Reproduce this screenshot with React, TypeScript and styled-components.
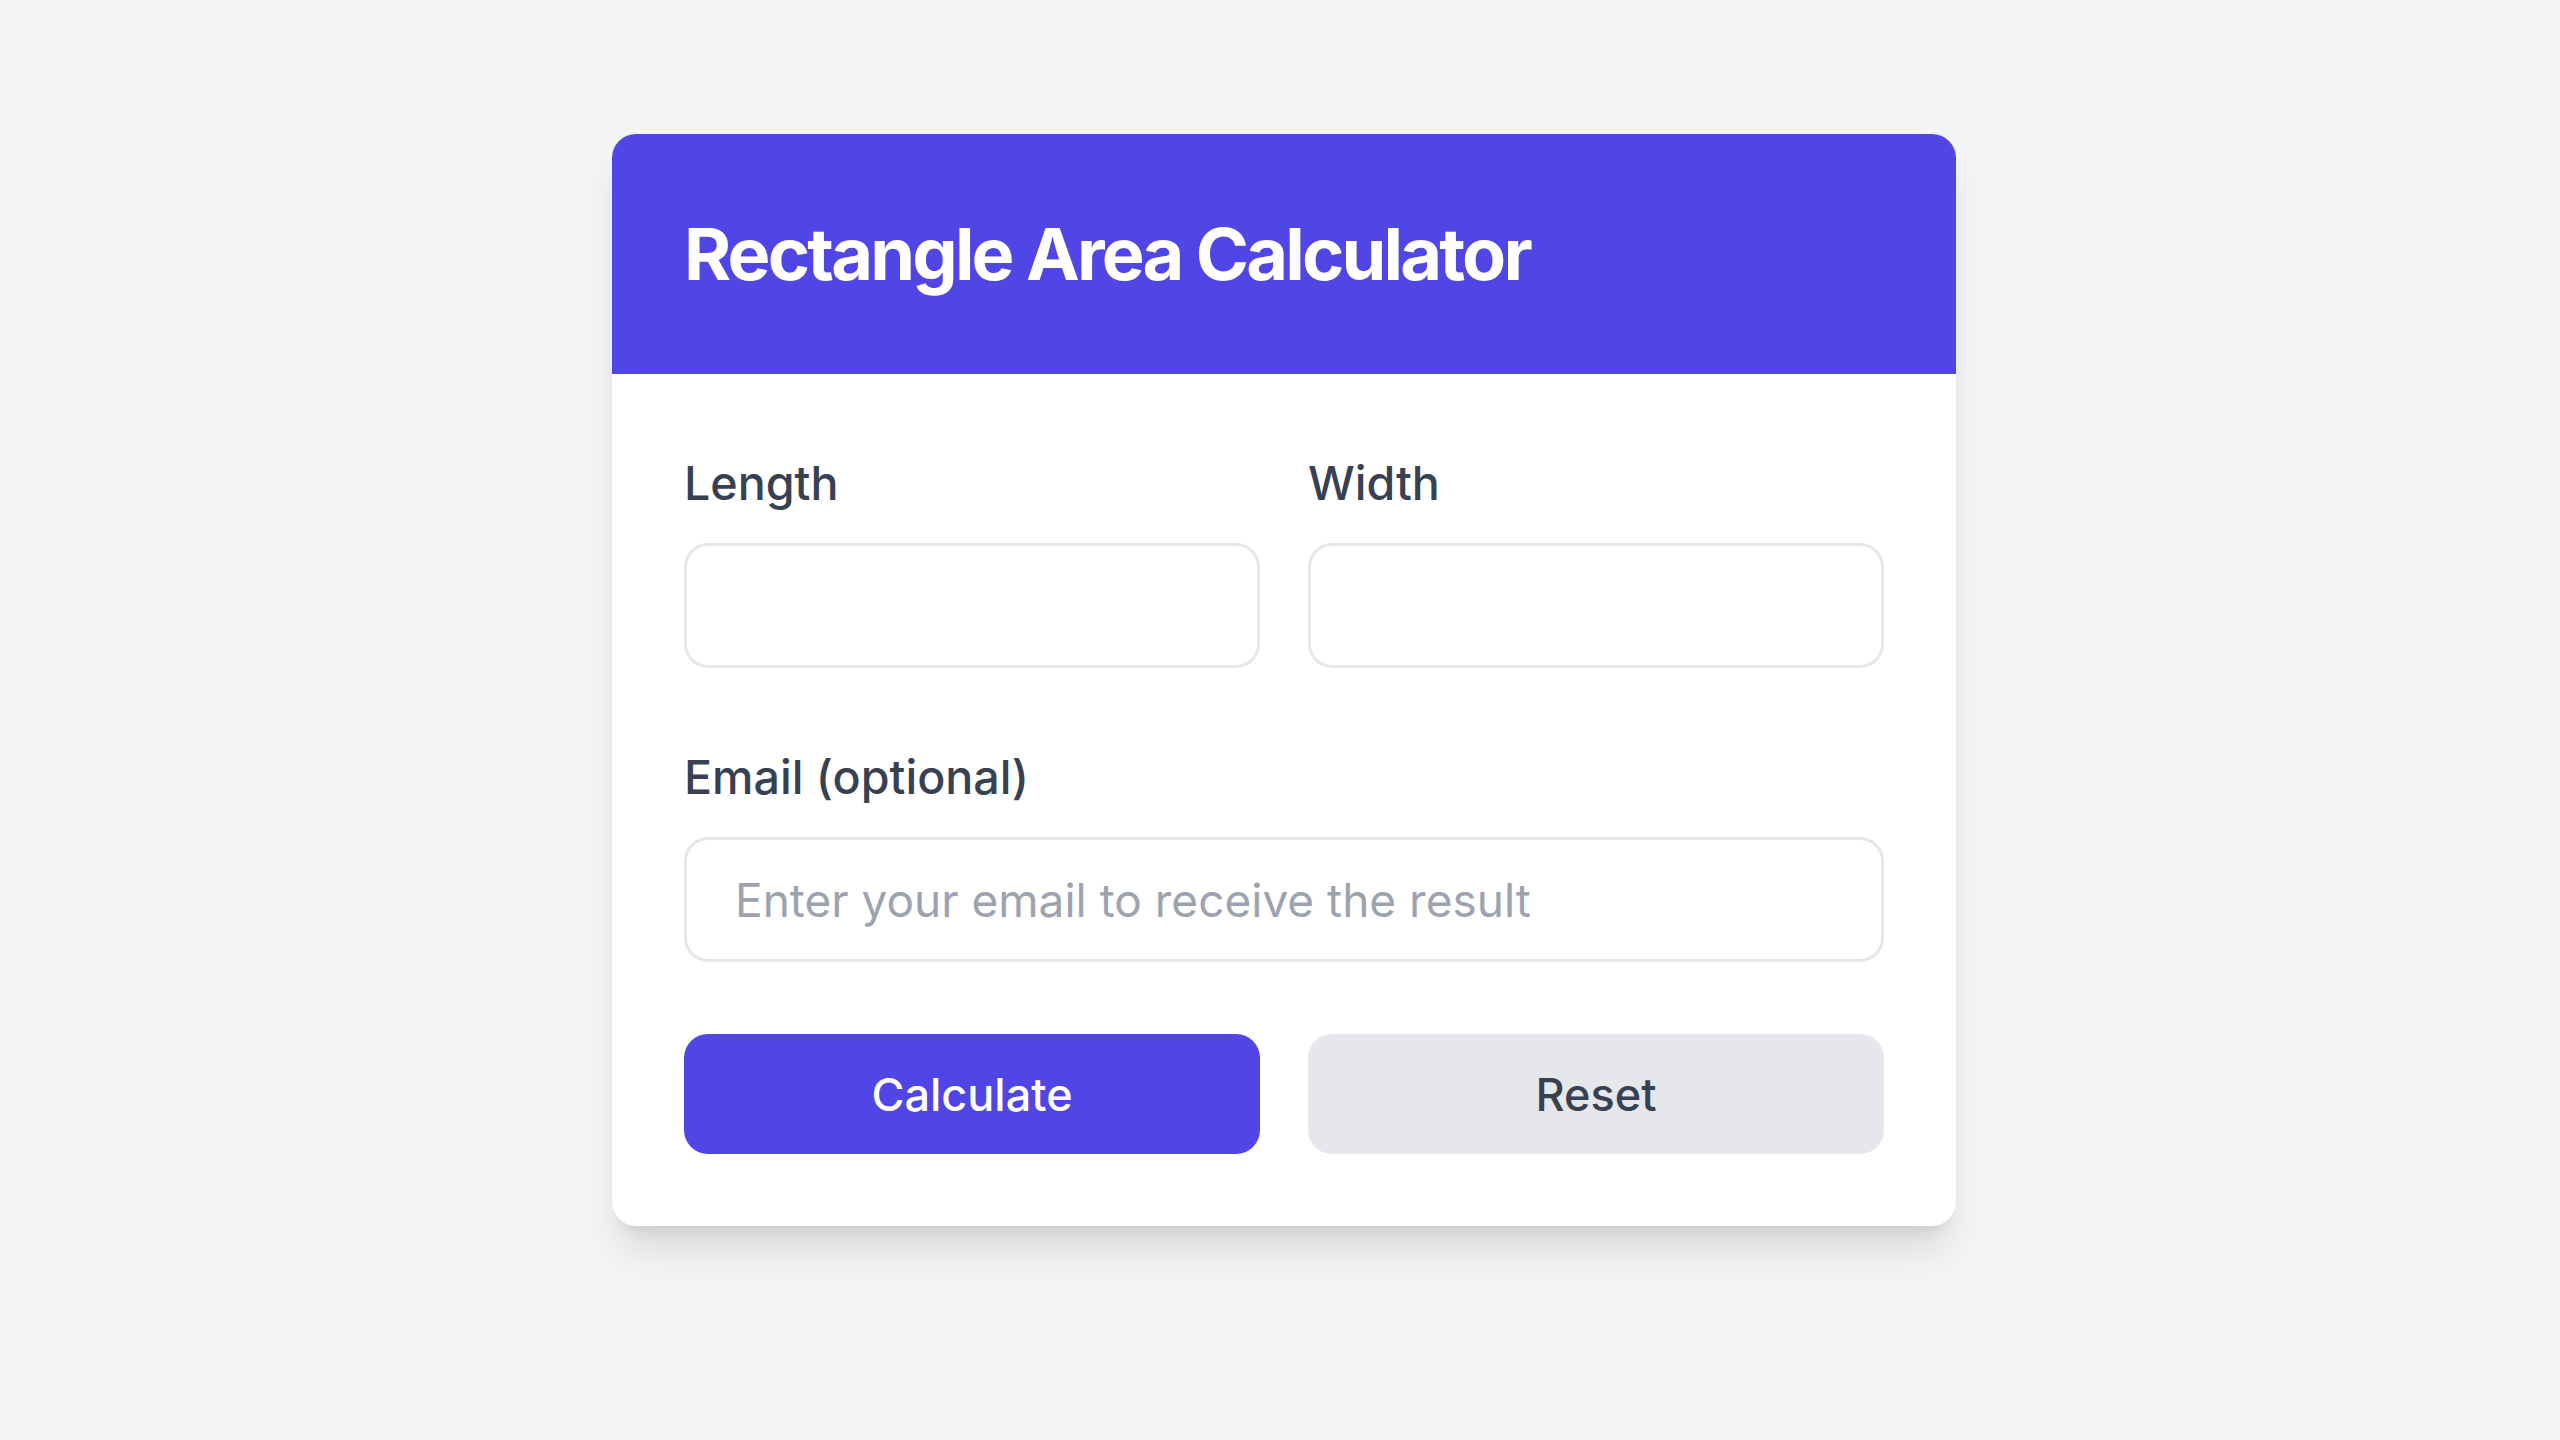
import React, { useState } from "react";
import styled, { createGlobalStyle } from "styled-components";

const GlobalStyle = createGlobalStyle`
  html, body {
    margin: 0;
    padding: 0;
    background: #f3f4f6;
    font-family: Inter, "Liberation Sans", Arial, sans-serif;
  }
  * { box-sizing: border-box; }
`;

const Page = styled.main`
  min-height: 100vh;
  display: flex;
  justify-content: center;
  align-items: flex-start;
  padding: 134px 0 0 8px;
`;

const Card = styled.section`
  width: 1344px;
  background: #ffffff;
  border-radius: 24px;
  overflow: hidden;
  box-shadow: 0 30px 37.5px -7.5px rgba(0, 0, 0, 0.1),
    0 12px 15px -9px rgba(0, 0, 0, 0.1);
`;

const Header = styled.header`
  background: #4f46e5;
  padding: 84px 72px;
`;

const Title = styled.h1`
  margin: 0;
  color: #ffffff;
  font-size: 72px;
  line-height: 72px;
  font-weight: 700;
  letter-spacing: -2.8px;
`;

const Body = styled.form`
  padding: 82px 72px 72px;
  display: flex;
  flex-direction: column;
`;

const Row = styled.div<{ $top?: number }>`
  display: grid;
  grid-template-columns: 1fr 1fr;
  column-gap: 48px;
  margin-top: ${(p) => p.$top ?? 0}px;
`;

const Field = styled.div<{ $top?: number }>`
  display: flex;
  flex-direction: column;
  margin-top: ${(p) => p.$top ?? 0}px;
`;

const Label = styled.label`
  display: block;
  color: #374151;
  font-size: 46.6px;
  line-height: 54px;
  font-weight: 500;
  margin-bottom: 33px;
`;

const Input = styled.input`
  width: 100%;
  height: 125px;
  border: 3px solid #e5e7eb;
  border-radius: 24px;
  padding: 0 48px;
  font-family: inherit;
  font-size: 46px;
  color: #111827;
  background: #ffffff;
  outline: none;
  &::placeholder {
    color: #9ca3af;
  }
`;

const Button = styled.button<{ $variant: "primary" | "secondary" }>`
  height: 120px;
  border: none;
  border-radius: 24px;
  font-family: inherit;
  font-size: 45px;
  font-weight: 500;
  cursor: pointer;
  background: ${(p) => (p.$variant === "primary" ? "#4f46e5" : "#e5e7eb")};
  color: ${(p) => (p.$variant === "primary" ? "#ffffff" : "#374151")};
`;

export default function App() {
  const [length, setLength] = useState("");
  const [width, setWidth] = useState("");
  const [email, setEmail] = useState("");

  return (
    <>
      <GlobalStyle />
      <Page>
        <Card>
          <Header>
            <Title>Rectangle Area Calculator</Title>
          </Header>
          <Body onSubmit={(e) => e.preventDefault()}>
            <Row>
              <Field>
                <Label htmlFor="length">Length</Label>
                <Input
                  id="length"
                  type="number"
                  value={length}
                  onChange={(e) => setLength(e.target.value)}
                />
              </Field>
              <Field>
                <Label htmlFor="width">Width</Label>
                <Input
                  id="width"
                  type="number"
                  value={width}
                  onChange={(e) => setWidth(e.target.value)}
                />
              </Field>
            </Row>
            <Field $top={82}>
              <Label htmlFor="email">Email (optional)</Label>
              <Input
                id="email"
                type="email"
                placeholder="Enter your email to receive the result"
                value={email}
                onChange={(e) => setEmail(e.target.value)}
              />
            </Field>
            <Row $top={72}>
              <Button $variant="primary" type="submit">
                Calculate
              </Button>
              <Button
                $variant="secondary"
                type="button"
                onClick={() => {
                  setLength("");
                  setWidth("");
                  setEmail("");
                }}
              >
                Reset
              </Button>
            </Row>
          </Body>
        </Card>
      </Page>
    </>
  );
}
